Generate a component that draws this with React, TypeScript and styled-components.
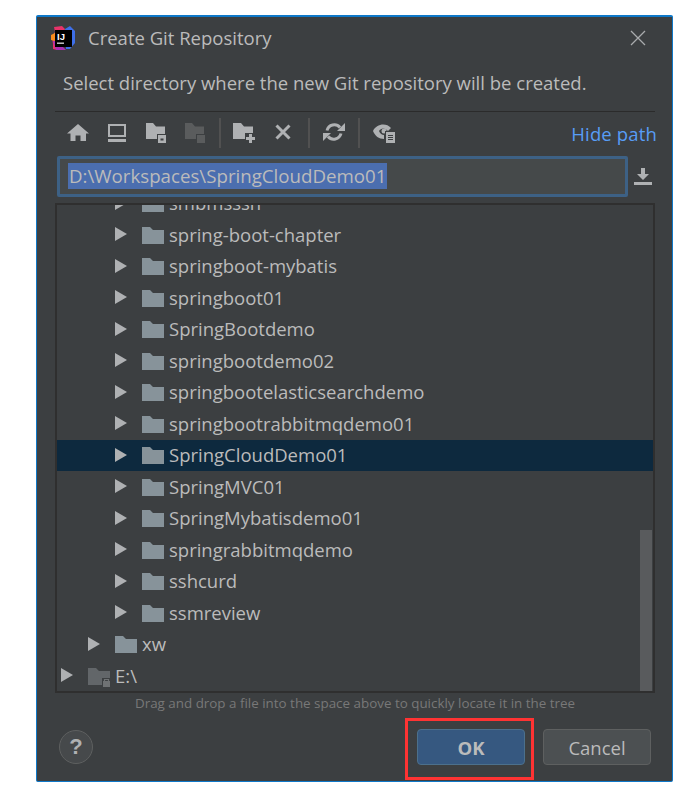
import React from 'react';
import styled, { createGlobalStyle } from 'styled-components';

const GlobalStyle = createGlobalStyle`
  html, body {
    margin: 0;
    padding: 0;
    background: #ffffff;
  }
  body {
    font-family: "Open Sans", "Noto Sans", "Liberation Sans", sans-serif;
  }
`;

const Page = styled.div`
  position: relative;
  width: 689px;
  height: 799px;
  padding: 15px 0 0 36px;
  box-sizing: border-box;
  overflow: hidden;
`;

const Dialog = styled.div`
  width: 637px;
  height: 767px;
  box-sizing: border-box;
  background: #3c3f41;
  border: 1px solid #0f78c8;
  border-top-width: 2px;
  border-radius: 2px;
  padding: 0 17px 0 18px;
  display: flex;
  flex-direction: column;
  color: #bbbbbb;
`;

const TitleBar = styled.div`
  height: 40px;
  margin-left: -4px;
  display: flex;
  align-items: center;
  padding-top: 1px;
  box-sizing: border-box;
`;

const Title = styled.div`
  margin-left: 13px;
  font-size: 18.5px;
  flex: 1;
`;

const CloseButton = styled.div`
  width: 18px;
  height: 18px;
  margin-right: 8px;
  display: flex;
`;

const Prompt = styled.div`
  margin: 16px 0 0 8px;
  font-size: 18.5px;
  line-height: 20px;
`;

const Divider = styled.div`
  height: 1px;
  background: #2b2b2b;
  margin-top: 18px;
`;

const Toolbar = styled.div`
  display: flex;
  align-items: center;
  height: 44px;
  padding-bottom: 2px;
  box-sizing: border-box;
  margin: 0 -2px 0 3px;
`;

const ToolSlot = styled.div`
  width: 39px;
  display: flex;
  justify-content: center;
  align-items: center;
`;

const ToolSeparator = styled.div`
  width: 2px;
  height: 30px;
  margin: 0 4px 0 5px;
  background: #515151;
`;

const HidePath = styled.div`
  margin-left: auto;
  font-size: 18.5px;
  color: #589df6;
  letter-spacing: 0.15px;
`;

const PathRow = styled.div`
  display: flex;
  align-items: center;
  height: 41px;
  margin-left: 2px;
`;

const PathField = styled.div`
  width: 571px;
  height: 41px;
  box-sizing: border-box;
  background: #45494a;
  border: 3px solid #3d6185;
  border-radius: 2px;
  padding: 4px 8px;
  display: flex;
`;

const PathText = styled.span`
  background: #4b6eaf;
  color: #bbbbbb;
  font-size: 18.7px;
  line-height: 26px;
  height: 26px;
  padding: 0 1px;
`;

const DownloadButton = styled.div`
  margin-left: 5px;
  display: flex;
`;

const TreePanel = styled.div`
  position: relative;
  width: 600px;
  height: 490px;
  margin-top: 6px;
  box-sizing: border-box;
  border: 2px solid #2f2f2f;
  overflow: hidden;
`;

const TreeList = styled.div`
  margin-top: -17.5px;
`;

const TreeRow = styled.div<{ $depth: number; $selected?: boolean }>`
  height: 31.5px;
  display: flex;
  align-items: center;
  box-sizing: border-box;
  padding-left: ${props => 4 + props.$depth * 27}px;
  background: ${props => (props.$selected ? '#0d293e' : 'transparent')};
`;

const Arrow = styled.div`
  width: 0;
  height: 0;
  border-left: 12px solid #afb1b3;
  border-top: 7px solid transparent;
  border-bottom: 7px solid transparent;
  margin-top: -1px;
`;

const FolderSlot = styled.div`
  margin-left: 15px;
  width: 22px;
  height: 18px;
  display: flex;
`;

const RowLabel = styled.span`
  margin-left: 5px;
  font-size: 18.5px;
  line-height: 22px;
  color: #bbbbbb;
`;

const ScrollThumb = styled.div`
  position: absolute;
  right: 1px;
  bottom: 0;
  width: 12px;
  height: 161px;
  background: #595b5d;
`;

const Hint = styled.div`
  margin-top: 2px;
  text-align: center;
  font-size: 13.4px;
  line-height: 17px;
  color: #787878;
`;

const Footer = styled.div`
  display: flex;
  align-items: center;
  margin-top: 17px;
`;

const HelpButton = styled.div`
  width: 34px;
  height: 34px;
  margin-left: 4px;
  box-sizing: border-box;
  border-radius: 50%;
  border: 1px solid #5e6060;
  background: #46494b;
  color: #afb1b3;
  font-size: 22px;
  font-weight: 700;
  display: flex;
  align-items: center;
  justify-content: center;
  font-family: "Liberation Sans", sans-serif;
`;

const FooterButtons = styled.div`
  margin-left: auto;
  margin-right: 4px;
  display: flex;
  gap: 18px;
`;

const Button = styled.div<{ $primary?: boolean }>`
  width: 108px;
  height: 36px;
  box-sizing: border-box;
  border-radius: 4px;
  border: 1px solid ${props => (props.$primary ? '#4c708c' : '#5e6060')};
  background: ${props => (props.$primary ? '#365880' : '#4c5052')};
  color: #bbbbbb;
  font-size: 18.5px;
  font-weight: ${props => (props.$primary ? 700 : 400)};
  display: flex;
  align-items: center;
  justify-content: center;
`;

const Highlight = styled.div`
  position: absolute;
  left: 405px;
  top: 718px;
  width: 129px;
  height: 62px;
  box-sizing: border-box;
  border: 3px solid #ff3333;
  pointer-events: none;
`;

const iconFill = '#afb1b3';

function Logo() {
  return (
    <svg width="24" height="24" viewBox="0 0 24 24">
      <path d="M1 11 L4 6 L3 1 L11 0 L14 3 L6 24 L2 23 L2 18 Z" fill="#e8336a" />
      <path d="M0 9 L4 7 L4 15 L0 14 Z" fill="#f78c1e" />
      <path d="M2 15 L5 24 L15 24 L6 15 Z" fill="#a92fb5" />
      <path d="M14 3 L19 0 L24 5 L24 17 L19 23 L15 23 Z" fill="#3e6fe8" />
      <rect x="4" y="4" width="17" height="17" fill="#000000" />
      <text x="6" y="13.5" fontSize="9.5" fontWeight="700" fill="#ffffff" fontFamily="Liberation Sans, sans-serif">IJ</text>
      <rect x="6" y="16.5" width="7" height="1.4" fill="#d0d0d0" />
    </svg>
  );
}

function HomeIcon() {
  return (
    <svg width="24" height="24" viewBox="0 0 24 24">
      <path d="M12 3 L23 12.5 H20 V20 H14.5 V14.5 H9.5 V20 H4.5 V12.5 H1 Z" fill={iconFill} />
    </svg>
  );
}

function DesktopIcon() {
  return (
    <svg width="24" height="24" viewBox="0 0 24 24">
      <path fillRule="evenodd" d="M3 3 H21 V16 H3 Z M5 5 V14 H19 V5 Z" fill={iconFill} />
      <rect x="3" y="18" width="18" height="3" fill={iconFill} />
    </svg>
  );
}

function ModuleFolderIcon({ dim }: { dim?: boolean }) {
  const fill = dim ? '#5a5c5d' : iconFill;
  return (
    <svg width="24" height="24" viewBox="0 0 24 24">
      <path d="M2 2 H9 L12 5.5 H21 V18 H2 Z" fill={fill} />
      <rect x="13" y="13" width="10" height="9" fill="#3c3f41" />
      <rect x="14" y="14" width="8" height="8" fill={fill} />
      {!dim && <rect x="16.5" y="17.5" width="3" height="2" fill="#3c3f41" />}
    </svg>
  );
}

function NewFolderIcon() {
  return (
    <svg width="24" height="24" viewBox="0 0 24 24">
      <path d="M0 2 H8 L11 5.5 H20 V18 H0 Z" fill={iconFill} />
      <rect x="12" y="12" width="11" height="11" fill="#3c3f41" />
      <path d="M16 13 H19 V16 H22 V19 H19 V22 H16 V19 H13 V16 H16 Z" fill={iconFill} />
    </svg>
  );
}

function DeleteIcon() {
  return (
    <svg width="24" height="24" viewBox="0 0 24 24">
      <path d="M4.5 4.5 L17.5 17.5 M17.5 4.5 L4.5 17.5" stroke={iconFill} strokeWidth="3" />
    </svg>
  );
}

function RefreshIcon() {
  return (
    <svg width="24" height="24" viewBox="0 0 24 24">
      <path d="M5 9.5 A7.5 7.5 0 0 1 18 6.5" stroke={iconFill} strokeWidth="3" fill="none" />
      <path d="M15 10 H23 V2 Z" fill={iconFill} />
      <path d="M19 12.5 A7.5 7.5 0 0 1 6 15.5" stroke={iconFill} strokeWidth="3" fill="none" />
      <path d="M9 12 H1 V20 Z" fill={iconFill} />
    </svg>
  );
}

function ShowHiddenIcon() {
  return (
    <svg width="24" height="24" viewBox="0 0 24 24">
      <path d="M1 10 C4 3 14 1 19 7 L16 10 C13 6.5 9 6.5 7 10 C8 12.5 10 14 12 14 V18 C7 18 3 15 1 10 Z" fill={iconFill} />
      <circle cx="12" cy="10" r="2.5" fill={iconFill} />
      <path d="M13 10 H21 L24 12 V23 H13 Z" fill="#3c3f41" />
      <path d="M14 11 H23 V22 H14 Z" fill={iconFill} />
      <path d="M16 14.5 H21 M16 16.5 H21 M16 18.5 H21" stroke="#3c3f41" strokeWidth="1" />
    </svg>
  );
}

function CloseIcon() {
  return (
    <svg width="18" height="18" viewBox="0 0 18 18">
      <path d="M2 2 L16 16 M16 2 L2 16" stroke="#a9abad" strokeWidth="1.3" />
    </svg>
  );
}

function DownloadIcon() {
  return (
    <svg width="20" height="20" viewBox="0 0 20 20">
      <path d="M8 1 H12 V7 H16 L10 13 L4 7 H8 Z" fill={iconFill} />
      <rect x="1" y="15" width="18" height="3" fill={iconFill} />
    </svg>
  );
}

function FolderIcon({ drive }: { drive?: boolean }) {
  const fill = drive ? '#626669' : '#87939a';
  return (
    <svg width="22" height="20" viewBox="0 0 22 20">
      <path d="M0 1 H8 L11 4 H22 V18 H0 Z" fill={fill} />
      {drive && (
        <>
          <rect x="14" y="11" width="8" height="9" fill="#3c3f41" />
          <rect x="15" y="14" width="7" height="6" fill="#6f7274" />
          <path d="M16.5 14 V12.5 H20.5 V14" stroke="#6f7274" strokeWidth="1.2" fill="none" />
        </>
      )}
    </svg>
  );
}

const rows = [
  { name: 'smbmsssh', depth: 2 },
  { name: 'spring-boot-chapter', depth: 2 },
  { name: 'springboot-mybatis', depth: 2 },
  { name: 'springboot01', depth: 2 },
  { name: 'SpringBootdemo', depth: 2 },
  { name: 'springbootdemo02', depth: 2 },
  { name: 'springbootelasticsearchdemo', depth: 2 },
  { name: 'springbootrabbitmqdemo01', depth: 2 },
  { name: 'SpringCloudDemo01', depth: 2, selected: true },
  { name: 'SpringMVC01', depth: 2 },
  { name: 'SpringMybatisdemo01', depth: 2 },
  { name: 'springrabbitmqdemo', depth: 2 },
  { name: 'sshcurd', depth: 2 },
  { name: 'ssmreview', depth: 2 },
  { name: 'xw', depth: 1 },
  { name: 'E:\\', depth: 0, drive: true },
];

export default function App() {
  return (
    <Page>
      <GlobalStyle />
      <Dialog>
        <TitleBar>
          <Logo />
          <Title>Create Git Repository</Title>
          <CloseButton>
            <CloseIcon />
          </CloseButton>
        </TitleBar>
        <Prompt>Select directory where the new Git repository will be created.</Prompt>
        <Divider />
        <Toolbar>
          <ToolSlot><HomeIcon /></ToolSlot>
          <ToolSlot><DesktopIcon /></ToolSlot>
          <ToolSlot><ModuleFolderIcon /></ToolSlot>
          <ToolSlot><ModuleFolderIcon dim /></ToolSlot>
          <ToolSeparator />
          <ToolSlot><NewFolderIcon /></ToolSlot>
          <ToolSlot><DeleteIcon /></ToolSlot>
          <ToolSeparator />
          <ToolSlot><RefreshIcon /></ToolSlot>
          <ToolSeparator />
          <ToolSlot><ShowHiddenIcon /></ToolSlot>
          <HidePath>Hide path</HidePath>
        </Toolbar>
        <PathRow>
          <PathField>
            <PathText>D:\Workspaces\SpringCloudDemo01</PathText>
          </PathField>
          <DownloadButton>
            <DownloadIcon />
          </DownloadButton>
        </PathRow>
        <TreePanel>
          <TreeList>
            {rows.map(row => (
              <TreeRow key={row.name} $depth={row.depth} $selected={row.selected}>
                <Arrow />
                <FolderSlot>
                  <FolderIcon drive={row.drive} />
                </FolderSlot>
                <RowLabel>{row.name}</RowLabel>
              </TreeRow>
            ))}
          </TreeList>
          <ScrollThumb />
        </TreePanel>
        <Hint>Drag and drop a file into the space above to quickly locate it in the tree</Hint>
        <Footer>
          <HelpButton>?</HelpButton>
          <FooterButtons>
            <Button $primary>OK</Button>
            <Button>Cancel</Button>
          </FooterButtons>
        </Footer>
      </Dialog>
      <Highlight />
    </Page>
  );
}
